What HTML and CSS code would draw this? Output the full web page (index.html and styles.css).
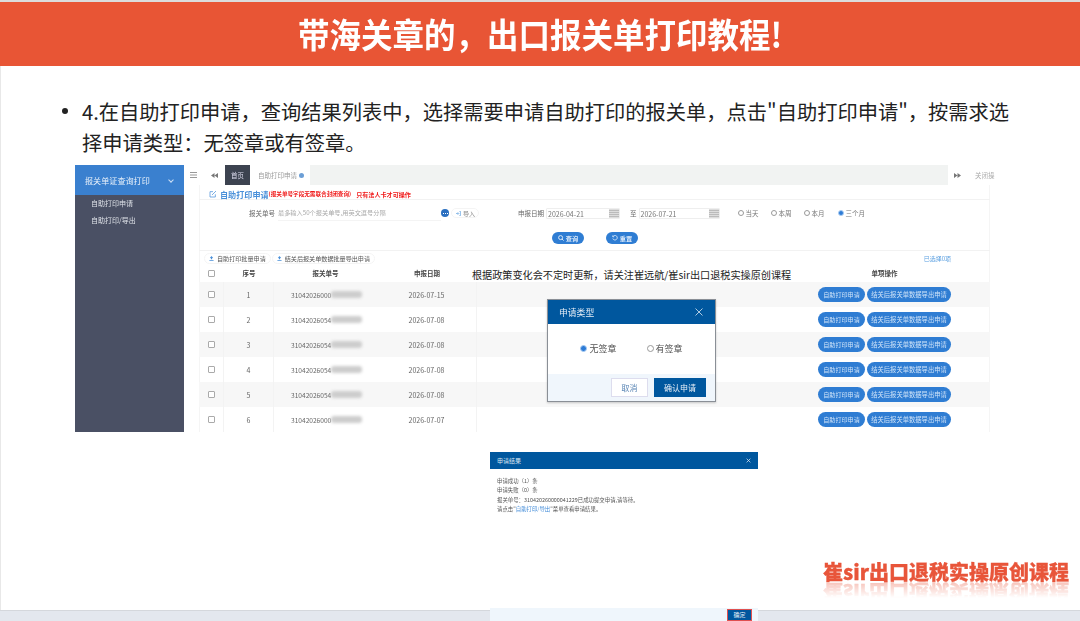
FILE: index.html

```html
<!DOCTYPE html>
<html lang="zh-CN">
<head>
  <meta charset="UTF-8" />
  <meta name="viewport" content="width=device-width, initial-scale=1.0">
  <title>出口报关单打印教程</title>
  <link rel="stylesheet" href="styles.css">
</head>
<body>
  <header class="banner"><span>带海关章的，出口报关单打印教程!</span></header>

  <main class="slide">
    <div class="bullet">
      <span class="dot"></span>
      <p>4.在自助打印申请，查询结果列表中，选择需要申请自助打印的报关单，点击"自助打印申请"，按需求选择申请类型：无签章或有签章。</p>
    </div>

    <div class="shot">
      <aside class="side">
        <div class="side-head"><span>报关单证查询打印</span><i class="chev"></i></div>
        <div class="side-item">自助打印申请</div>
        <div class="side-item">自助打印/导出</div>
      </aside>

      <div class="app">
        <div class="tabs">
          <svg class="tab-ico" viewBox="0 0 7 6"><path d="M0 .5H7M0 3H7M0 5.500H7" stroke="#999" fill="none"/></svg>
          <svg class="tab-arrow" viewBox="0 0 7 5"><path d="M3.500 0V5L0 2.500ZM7 0V5L3.500 2.500Z" fill="#777"/></svg>
          <span class="tab-on">首页</span>
          <span class="tab-off">自助打印申请<b class="tab-x"></b></span>
          <span class="tab-fill"></span>
          <svg class="tab-arrow right" viewBox="0 0 7 5"><path d="M0 0V5L3.500 2.500ZM3.500 0V5L7 2.500Z" fill="#777"/></svg>
          <span class="tab-close">关闭操</span>
        </div>

        <div class="panel">
          <div class="form-title">
            <svg class="edit" viewBox="0 0 12 12"><path d="M9.500 6.500V10.500H1.500V2.500H6M4.500 7.500L10.500 1.500" fill="none" stroke="#4a90d9" stroke-width="1.100"/></svg>
            <span class="big">自助打印申请</span>
            <span class="red">(报关单号字段无需联合封闭查询)</span>
            <span class="red gap">只有法人卡才可操作</span>
          </div>

          <div class="form-row">
            <span class="f-label">报关单号</span>
            <span class="f-input">最多输入50个报关单号,用英文逗号分隔</span>
            <span class="more"><i></i><i></i><i></i></span>
            <span class="import">
              <svg viewBox="0 0 6 6"><path d="M0 3H3M2 1.500L3.500 3L2 4.500M4 .5H5.500V5.500H4" fill="none" stroke="#5a9fe0" stroke-width=".8"/></svg>导入
            </span>
            <span class="f-label date-label">申报日期</span>
            <span class="date">2026-04-21<i></i></span>
            <span class="f-label to">至</span>
            <span class="date wide">2026-07-21<i></i></span>
            <span class="opt first"><i class="rd"></i>当天</span>
            <span class="opt"><i class="rd"></i>本周</span>
            <span class="opt"><i class="rd"></i>本月</span>
            <span class="opt last"><i class="rd on"></i>三个月</span>
          </div>

          <div class="form-btns">
            <span class="pill">
              <svg viewBox="0 0 6 6"><circle cx="2.600" cy="2.600" r="2" fill="none" stroke="#e6f0fb" stroke-width=".9"/><path d="M4 4L5.600 5.600" stroke="#e6f0fb" stroke-width=".9"/></svg>查询
            </span>
            <span class="pill">
              <svg viewBox="0 0 6 6"><path d="M1 1.500A2.300 2.300 0 1 1 .8 3.500M.8 .4V1.800H2.200" fill="none" stroke="#e6f0fb" stroke-width=".8"/></svg>重置
            </span>
          </div>

          <div class="tools">
            <span class="tool">
              <svg viewBox="0 0 6 6"><path d="M3 0L5 2.300H3.800V4H2.200V2.300H1ZM.5 4.800H5.500V5.800H.5Z" fill="#4a90d9"/></svg>自助打印批量申请
            </span>
            <span class="tool">
              <svg viewBox="0 0 6 6"><path d="M3 0L5 2.300H3.800V4H2.200V2.300H1ZM.5 4.800H5.500V5.800H.5Z" fill="#4a90d9"/></svg>结关后报关单数据批量导出申请
            </span>
            <span class="picked">已选择0项</span>
          </div>

          <div class="row head">
            <span class="c-check"><i class="box"></i></span>
            <span class="c-no">序号</span>
            <span class="c-code">报关单号</span>
            <span class="c-date">申报日期</span>
            <span class="c-mid"></span>
            <span class="c-ops">单项操作</span>
          </div>
          <div id="rows"></div>
        </div>
      </div>

      <div class="notice">根据政策变化会不定时更新，请关注崔远航/崔sir出口退税实操原创课程</div>

      <div class="dialog">
        <div class="dialog-head">
          <span>申请类型</span>
          <svg class="x" viewBox="0 0 8 8"><path d="M.5 .5L7.500 7.500M7.500 .5L.5 7.500" stroke="#dbe7f3" stroke-width=".8"/></svg>
        </div>
        <div class="dialog-body">
          <span class="d-opt"><i class="rd on"></i>无签章</span>
          <span class="d-opt"><i class="rd"></i>有签章</span>
        </div>
        <div class="dialog-foot">
          <span class="btn-line">取消</span>
          <span class="btn-solid">确认申请</span>
        </div>
      </div>
    </div>

    <div class="result">
      <div class="result-head">
        <span>申请结果</span>
        <svg class="x" viewBox="0 0 8 8"><path d="M1 1L7 7M7 1L1 7" stroke="#dbe7f3" stroke-width="1.200"/></svg>
      </div>
      <div class="result-body">
        <div>申请成功（1）条</div>
        <div>申请失败（0）条</div>
        <div>报关单号：310420260000041229已成功提交申请,请等待。</div>
        <div>请点击"<span class="link">自助打印/导出</span>"菜单查看申请结果。</div>
      </div>
    </div>

    <div class="brand">崔sir出口退税实操原创课程</div>
  </main>

  <footer class="bottom">
    <div class="bottom-panel"><span class="ok">确定</span></div>
  </footer>

  <script>
    const data = [
      ["1", "31042026000", "2026-07-15"],
      ["2", "31042026054", "2026-07-08"],
      ["3", "31042026054", "2026-07-08"],
      ["4", "31042026054", "2026-07-08"],
      ["5", "31042026054", "2026-07-08"],
      ["6", "31042026000", "2026-07-07"]
    ];
    const rows = document.getElementById("rows");
    data.forEach(item => {
      const row = document.createElement("div");
      row.className = "row";
      row.innerHTML = `
        <span class="c-check"><i class="box"></i></span>
        <span class="c-no">${item[0]}</span>
        <span class="c-code">${item[1]}<i class="smudge"></i></span>
        <span class="c-date">${item[2]}</span>
        <span class="c-mid"></span>
        <span class="c-ops"><b class="act">自助打印申请</b><b class="act long">结关后报关单数据导出申请</b></span>`;
      rows.appendChild(row);
    });
  </script>
</body>
</html>
```

FILE: styles.css

```css
* { box-sizing: border-box; }
html, body { margin: 0; height: 621px; overflow: hidden; }
body { display: flex; flex-direction: column; background: #fff; font-family: "Noto Sans CJK SC", "Liberation Sans", sans-serif; color: #333; }
i, b { font-style: normal; font-weight: normal; }
svg { display: block; flex: none; }

.banner { height: 66px; flex: none; background: #e85535; border-top: 2px solid #dcdcdc; color: #fff; font-size: 31.500px; font-weight: 700; line-height: 62px; text-align: center; }
.banner span { display: inline-block; transform: scaleY(1.08); }

.slide { flex: 1; position: relative; min-height: 0; border-left: 1px solid #e8e8e8; }
.bullet { display: flex; padding: 30px 58px 0 61px; }
.dot { flex: none; width: 6px; height: 6px; margin: 12px 14px 0 0; border-radius: 50%; background: #222; }
.bullet p { margin: 0; font-size: 20.250px; line-height: 31px; color: #222; }

.shot { position: relative; display: flex; height: 267px; margin: 7px 0 0 74px; width: 920px; }
.side, .app, .dialog, .result { filter: blur(.3px); }

.side { width: 109px; flex: none; background: #4a5064; color: #dfe2e8; font-size: 7px; }
.side-head { display: flex; justify-content: space-between; align-items: center; height: 30px; padding: 0 11px 0 10px; background: #3a80cf; font-size: 8.100px; color: #e8f0fa; }
.chev { width: 4px; height: 4px; border-right: 1px solid #cfe0f5; border-bottom: 1px solid #cfe0f5; transform: rotate(45deg); }
.side-item { height: 17px; line-height: 17px; padding-left: 16px; }

.app { flex: 1; min-width: 0; margin-left: 5px; font-size: 7px; color: #666; }

.tabs { display: flex; align-items: center; height: 20px; font-size: 6.500px; }
.tab-ico { width: 7px; height: 6px; margin: 0 7px 0 1px; }
.tab-arrow { width: 7px; height: 5px; margin: 0 6px 0 7px; }
.tab-on { width: 25px; height: 20px; margin-left: 1px; line-height: 20px; text-align: center; background: #3c4350; color: #dde; }
.tab-off { display: flex; align-items: center; width: 60px; padding-left: 8px; color: #999; white-space: nowrap; }
.tab-x { width: 5px; height: 5px; margin-left: 2px; border-radius: 50%; background: #6c9fd6; }
.tab-fill { width: 638px; height: 20px; background: #f1f3f2; }
.tab-arrow.right { margin: 0 0 0 6px; }
.tab-close { margin-left: 14px; color: #aaa; white-space: nowrap; }

.panel { margin: 0 5px 0 10px; height: 247px; box-shadow: inset 1px 0 #f5f5f5, inset -1px 0 #f5f5f5; }

.form-title { display: flex; align-items: center; height: 14px; padding: 4px 0 0 10px; white-space: nowrap; }
.edit { width: 8px; height: 8px; margin-right: 3px; }
.big { font-size: 8.100px; color: #4a90d9; font-weight: 700; }
.red { font-size: 5.600px; color: #f01818; font-weight: 700; }
.red.gap { margin-left: 5px; font-size: 6.100px; }

.form-row { display: flex; align-items: center; height: 27px; white-space: nowrap; border-top: 1px solid #f2f2f2; }
.f-label { font-size: 6.500px; color: #666; }
.form-row > .f-label:first-child { margin-left: 50px; }
.f-input { width: 163px; margin-left: 3px; padding: 3px 0; color: #aaa; font-size: 6.200px; border-bottom: 1px solid #f4f4f4; }
.more { display: flex; justify-content: center; align-items: center; gap: 1px; width: 8px; height: 8px; border-radius: 50%; background: #2a6fc0; }
.more i { width: 1px; height: 1px; background: #fff; }
.import { display: flex; align-items: center; width: 28px; height: 10px; margin-left: 2px; padding-left: 4px; border: 1px solid #f4f4f4; border-radius: 5px; color: #888; font-size: 6.100px; }
.import svg { width: 5px; height: 5px; margin-right: 2px; }
.date-label { margin-left: 39px; }
.date { display: flex; justify-content: space-between; width: 74px; height: 11px; margin-left: 2px; padding-left: 1px; line-height: 10px; border: 1px solid #eee; border-radius: 1px; font-size: 7px; color: #777; }
.date.wide { width: 81px; margin-left: 0; }
.date i { width: 10px; background: repeating-linear-gradient(0deg, #ddd 0 1px, #bbb 1px 2px); }
.to { margin: 0 2px 0 10px; }
.opt { display: flex; align-items: center; width: 21px; margin-left: 12px; font-size: 6.500px; color: #777; }
.opt.first { margin-left: 18px; }
.opt.last { width: 27px; margin-left: 13px; }
.rd { display: inline-block; flex: none; width: 6px; height: 6px; margin-right: 2px; border: 1px solid #999; border-radius: 50%; background: #fff; }
.rd.on { border-color: #a9ccf2; background: #2d7bd6; }

.form-btns { display: flex; gap: 22px; height: 24px; padding: 6px 0 0 353px; }
.pill { display: flex; align-items: center; justify-content: center; gap: 2px; width: 32px; height: 12px; border-radius: 6px; background: #2f7dd3; color: #dceafa; font-size: 6.200px; font-weight: 700; }
.pill svg { width: 6px; height: 6px; }

.tools { display: flex; align-items: center; gap: 1px; height: 14px; border-top: 1px solid #f2f2f2; padding: 1px 0 0 5px; }
.tool { display: flex; align-items: center; height: 11px; padding: 0 4px; border: 1px solid #f4f4f4; border-radius: 6px; font-size: 6.100px; color: #555; white-space: nowrap; }
.tool svg { width: 5px; height: 5px; margin-right: 3px; }
.picked { margin-left: auto; margin-right: 39px; color: #5a9fe0; font-size: 6px; }

.row { display: flex; align-items: center; height: 25px; font-size: 7px; color: #666; white-space: nowrap; }
.row.head { height: 18px; color: #444; font-size: 6.500px; font-weight: 700; }
#rows .row:nth-child(odd) { background: #f7f7f7; }
.row > span { display: flex; align-items: center; justify-content: center; height: 100%; }
#rows .c-check, #rows .c-no, #rows .c-date { border-right: 1px solid #f3f3f3; }
.row > .c-check { width: 25px; }
.box { width: 7px; height: 7px; border: 1px solid #aaa; border-radius: 1px; background: #fff; }
.row > .c-no { width: 50px; }
.row > .c-code { width: 103px; }
#rows .c-code { justify-content: flex-start; padding-left: 17px; font-size: 6.600px; }
.smudge { width: 31px; height: 7px; background: #cdcdcd; border-radius: 3px; filter: blur(1.500px); }
.row > .c-date { width: 100px; }
.row > .c-mid { flex: 1; }
.row > .c-ops { width: 133px; margin-right: 39px; gap: 2px; }
.act { width: 47px; height: 15px; line-height: 15px; border-radius: 8px; background: #2f7dd3; color: #cfe3f8; font-size: 6.100px; text-align: center; }
.act.long { width: 84px; font-size: 6.300px; }

.notice { position: absolute; left: 397px; top: 102px; font-size: 10.150px; line-height: 15px; color: #222; white-space: nowrap; }

.dialog { position: absolute; left: 472px; top: 134px; width: 169px; border: 1px solid #8a8f96; background: #fff; box-shadow: 0 1px 2px rgba(0,0,0,.2); }
.dialog-head { display: flex; justify-content: space-between; align-items: center; height: 24px; padding: 0 12px 0 11px; background: #00579e; color: #e6eef7; font-size: 8.800px; }
.dialog-head .x { width: 8px; height: 8px; }
.dialog-body { display: flex; justify-content: center; gap: 30px; align-items: center; height: 50px; padding-bottom: 2px; font-size: 9px; color: #555; }
.d-opt { display: flex; align-items: center; }
.d-opt .rd { width: 7px; height: 7px; margin-right: 2px; }
.dialog-foot { display: flex; justify-content: flex-end; gap: 6px; align-items: center; height: 27px; padding-right: 9px; background: #f0f6fc; }
.btn-line { width: 37px; height: 19px; line-height: 17px; text-align: center; background: #fff; border: 1px solid #dde; color: #5a86b5; font-size: 8px; }
.btn-solid { width: 52px; height: 19px; line-height: 19px; text-align: center; background: #00579e; color: #e6eef7; font-size: 8px; }

.result { position: absolute; left: 489px; top: 386px; width: 268px; font-size: 5.400px; color: #555; }
.result-head { display: flex; justify-content: space-between; align-items: center; height: 17px; padding: 0 7px; background: #00579e; color: #dbe7f3; font-size: 6px; }
.result-head .x { width: 5px; height: 5px; }
.result-body { padding: 8px 0 0 7px; line-height: 9.300px; }
.link { color: #3f8ad8; }

.brand { position: absolute; right: 11px; top: 494px; font-size: 20px; font-weight: 900; line-height: 24px; color: #e8553a; white-space: nowrap; -webkit-text-stroke: .3px #e8553a; -webkit-box-reflect: below -4px linear-gradient(transparent 25%, rgba(255,255,255,.4)); }

.bottom { height: 11px; flex: none; position: relative; background: #e3e7ee; border-top: 1px solid #d4d7dc; }
.bottom-panel { position: absolute; left: 490px; top: -3px; width: 268px; height: 14px; background: #eff6fc; }
.ok { position: absolute; right: 6px; top: 1px; width: 25px; height: 12px; background: #00579e; border: 1px solid #e05050; color: #e6eef7; font-size: 6px; line-height: 10px; text-align: center; }
```
